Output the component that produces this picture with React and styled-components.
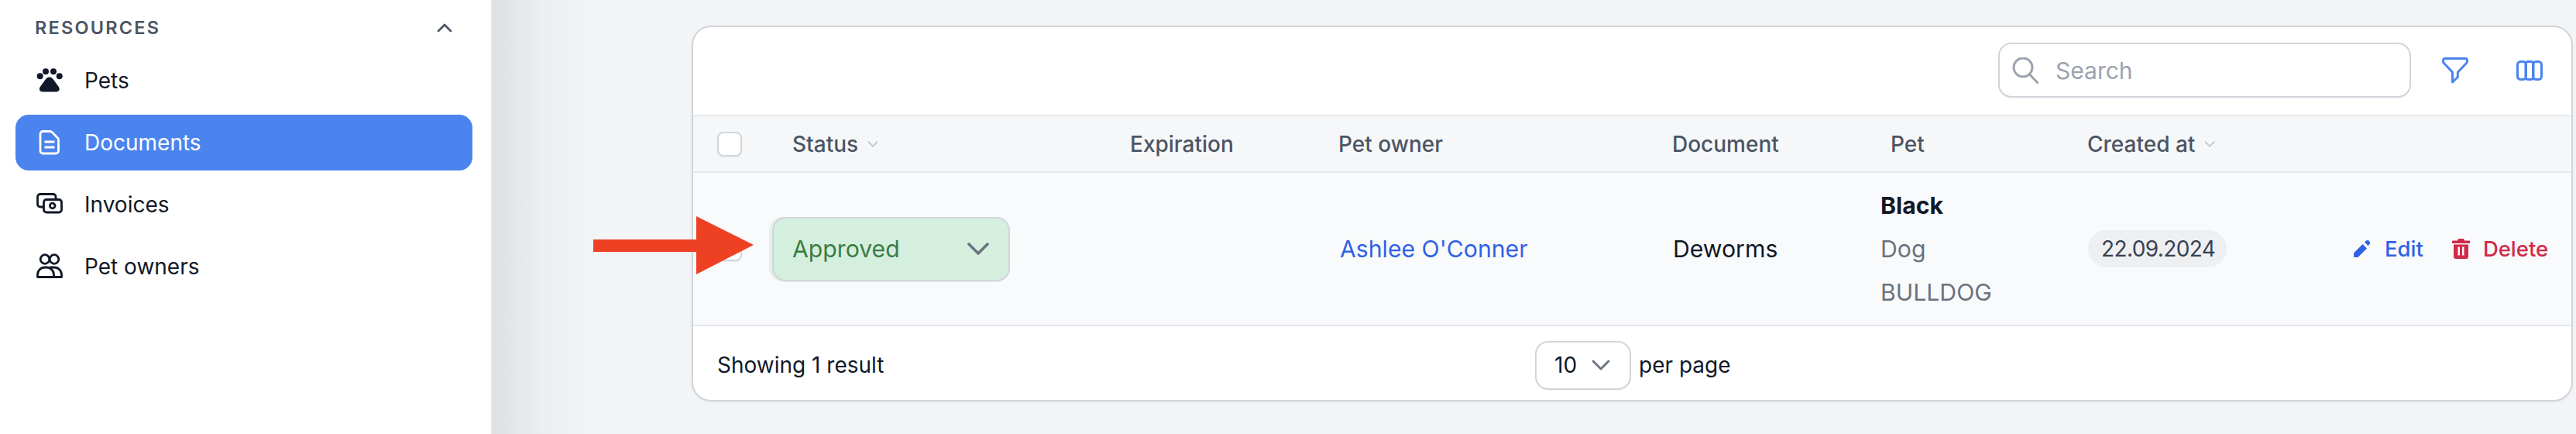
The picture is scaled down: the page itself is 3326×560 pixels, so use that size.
import React from 'react';
import styled, { createGlobalStyle } from 'styled-components';
import { ChevronDown, ChevronUp } from 'lucide-react';

const GlobalStyle = createGlobalStyle`
    html, body {
        margin: 0;
        padding: 0;
        background: #f3f4f6;
        font-family: Inter, "Liberation Sans", sans-serif;
    }
    * {
        box-sizing: border-box;
    }
`

const COLUMNS = '102px 462px 269px 431px 269px 267px 343px 1fr';

const Page = styled.div`
    display: flex;
    width: 3326px;
    height: 560px;
    overflow: hidden;
`

const Sidebar = styled.aside`
    width: 636px;
    flex-shrink: 0;
    background: #fff;
    border-right: 2px solid #e5e7eb;
    padding: 0 24px 0 20px;
`

const SectionHead = styled.div`
    display: flex;
    align-items: center;
    justify-content: space-between;
    height: 68px;
    padding: 3px 20px 0 25px;
    font-size: 23.5px;
    font-weight: 600;
    letter-spacing: 2.2px;
    color: #4b5563;
    svg {
        color: #4b5563;
    }
`

const NavList = styled.nav`
    display: flex;
    flex-direction: column;
    gap: 8px;
`

const NavItem = styled.a`
    display: flex;
    align-items: center;
    gap: 28px;
    height: 72px;
    padding-left: 27px;
    border-radius: 17px;
    font-size: 28px;
    background: ${p => (p.$active ? '#4b84ee' : 'transparent')};
    color: ${p => (p.$active ? '#fff' : '#111827')};
    svg {
        width: 34px;
        height: 34px;
        flex-shrink: 0;
    }
`

const Main = styled.main`
    flex: 1;
    padding: 33px 4px 0 257px;
    position: relative;
    background: linear-gradient(90deg, #dfe0e2, #eceef0 64px, #f3f4f6 140px);
`

const Card = styled.section`
    height: 485px;
    background: #fff;
    border: 2px solid #d1d5db;
    border-radius: 25px;
    overflow: hidden;
    box-shadow: 0 1px 3px rgba(0, 0, 0, 0.06);
`

const Toolbar = styled.div`
    display: flex;
    align-items: center;
    height: 113px;
    padding: 0 37px 2px 1685px;
`

const SearchBox = styled.label`
    display: flex;
    align-items: center;
    gap: 22px;
    width: 533px;
    height: 71px;
    padding-left: 16px;
    border: 2px solid #d1d5db;
    border-radius: 17px;
    background: #fff;
    font-size: 30px;
    color: #9ca3af;
    box-shadow: 0 1px 2px rgba(0, 0, 0, 0.05);
`

const ToolButton = styled.span`
    display: flex;
    margin-left: ${p => p.$gap}px;
    color: #4b84ee;
`

const HeadRow = styled.div`
    display: grid;
    grid-template-columns: ${COLUMNS};
    align-items: center;
    height: 75px;
    border-top: 2px solid #e5e7eb;
    border-bottom: 2px solid #e5e7eb;
    background: #f6f7f9;
    font-size: 28px;
    font-weight: 500;
    color: #4b5563;
`

const HeadCell = styled.div`
    display: flex;
    align-items: center;
    gap: 8px;
    padding-left: ${p => p.$inset || 0}px;
    svg {
        color: #c5c9d0;
    }
`

const BodyRow = styled.div`
    display: grid;
    grid-template-columns: ${COLUMNS};
    align-items: center;
    height: 198px;
    border-bottom: 2px solid #e5e7eb;
    background: #f9fafb;
    font-size: 30.2px;
    color: #111827;
`

const BodyCell = styled.div`
    padding-left: ${p => p.$inset || 0}px;
`

const Checkbox = styled.span`
    display: block;
    width: 32px;
    height: 32px;
    margin-left: 31px;
    background: #fff;
    border: 2px solid #d1d5db;
    border-radius: 8px;
    box-shadow: 0 1px 2px rgba(0, 0, 0, 0.06);
`

const StatusSelect = styled.div`
    display: flex;
    align-items: center;
    justify-content: space-between;
    width: 307px;
    height: 83px;
    padding: 0 15px 0 24px;
    background: #d5efdf;
    border: 2px solid #d1d5db;
    border-radius: 17px;
    color: #3a7d44;
    box-shadow: -4px 0 0 #e3f3e9, 0 1px 2px rgba(0, 0, 0, 0.06);
    svg {
        color: #6b7280;
    }
`

const OwnerLink = styled.a`
    color: #2f62e5;
`

const PetLines = styled.div`
    display: flex;
    flex-direction: column;
    line-height: 56px;
    color: #6b7280;
    strong {
        font-weight: 700;
        color: #111827;
    }
`

const DateBadge = styled.span`
    display: inline-block;
    padding: 0 15px 0 17px;
    height: 48px;
    line-height: 48px;
    border-radius: 24px;
    background: #eeeff1;
    color: #374151;
    font-size: 28px;
    letter-spacing: -0.6px;
`

const Actions = styled.div`
    display: flex;
    align-items: center;
    font-size: 27.5px;
    font-weight: 500;
`

const ActionLink = styled.a`
    display: flex;
    align-items: center;
    gap: ${p => p.$iconGap}px;
    margin-left: ${p => p.$gap || 0}px;
    color: ${p => p.$color};
`

const Footer = styled.div`
    display: grid;
    grid-template-columns: 1056px 1fr;
    align-items: center;
    height: 96px;
    padding: 4px 0 0 31px;
    font-size: 28px;
    color: #111827;
`

const PerPage = styled.div`
    display: flex;
    align-items: center;
    gap: 10px;
`

const PerPageSelect = styled.div`
    display: flex;
    align-items: center;
    justify-content: space-between;
    width: 124px;
    height: 63px;
    padding: 0 27px 0 23px;
    border: 2px solid #d1d5db;
    border-radius: 17px;
    background: #fff;
    box-shadow: 0 1px 2px rgba(0, 0, 0, 0.05);
    svg {
        color: #6b7280;
        margin: 0 -10px;
    }
`

const Pointer = styled.svg`
    position: absolute;
    left: 130px;
    top: 279px;
`

const PawIcon = () => (
    <svg viewBox="0 0 34 34" fill="currentColor">
        <circle cx="4.7" cy="11.3" r="4" />
        <circle cx="12" cy="5.3" r="4" />
        <circle cx="22" cy="5.3" r="4" />
        <circle cx="29.7" cy="11.3" r="4" />
        <path d="M16.8 12.5c2 0 3.7 1 5 3l6.8 9.3c2.2 3.1 1 6.7-3 6.7H8c-4 0-5.2-3.6-3-6.7l6.8-9.3c1.300-2 3-3 5-3z" />
    </svg>
)

const DocumentIcon = () => (
    <svg viewBox="0 0 34 34" fill="none" stroke="currentColor" strokeWidth="2.8" strokeLinejoin="round">
        <path d="M5 6a3.500 3.500 0 0 1 3.500-3.500h9.500a3 3 0 0 1 2.200 1L27.500 11a3 3 0 0 1 1 2.200V27.500a3.500 3.500 0 0 1-3.500 3.500H8.500A3.500 3.500 0 0 1 5 27.500z" />
        <path d="M10.500 16h13M10.500 23h13" />
    </svg>
)

const InvoiceIcon = () => (
    <svg viewBox="0 0 34 34" fill="none" stroke="currentColor" strokeWidth="2.8">
        <path d="M9 20H5a3.500 3.500 0 0 1-3.500-3.500V7A3.500 3.500 0 0 1 5 3.500h16.500A3.500 3.500 0 0 1 25 7v3.500" />
        <rect x="9.500" y="10.500" width="23" height="16.500" rx="3.500" />
        <circle cx="20.700" cy="18.500" r="3.300" />
    </svg>
)

const PetOwnersIcon = () => (
    <svg viewBox="0 0 34 34" fill="none" stroke="currentColor" strokeWidth="2.8" strokeLinejoin="round">
        <circle cx="11" cy="7.500" r="5.800" />
        <circle cx="23" cy="7.500" r="5.800" />
        <path d="M1.500 30.500v-3a9.500 9.500 0 0 1 9.500-9.500h2a9.500 9.500 0 0 1 9.500 9.500v3z" />
        <path d="M17 18h6a9.500 9.500 0 0 1 9.500 9.500v3H22.500" />
    </svg>
)

const SearchIcon = () => (
    <svg width="34" height="34" viewBox="0 0 34 34" fill="none" stroke="currentColor" strokeWidth="3" strokeLinecap="round">
        <circle cx="14" cy="13" r="12" />
        <path d="M23 22.500L32.500 32.500" />
    </svg>
)

const FilterIcon = () => (
    <svg width="34" height="34" viewBox="0 0 34 34" fill="none" stroke="currentColor" strokeWidth="3" strokeLinejoin="round">
        <path d="M4 1.500h26a2.500 2.500 0 0 1 2.500 2.500v1.500a2.500 2.500 0 0 1-.8 1.800L21 18.500a2 2 0 0 0-.7 1.500v5.500L13.500 32V20a2 2 0 0 0-.7-1.500L2.300 7.300a2.500 2.500 0 0 1-.8-1.800V4A2.500 2.500 0 0 1 4 1.500z" />
    </svg>
)

const ColumnsIcon = () => (
    <svg width="34" height="26" viewBox="0 0 34 26" fill="none" stroke="currentColor" strokeWidth="3">
        <rect x="1.500" y="1.500" width="11" height="23" rx="4" />
        <rect x="12" y="1.500" width="10" height="23" rx="3" />
        <rect x="21.500" y="1.500" width="11" height="23" rx="4" />
    </svg>
)

const PencilIcon = () => (
    <svg width="23" height="24" viewBox="0 0 23 24" fill="currentColor">
        <path d="M1 17.500L12.500 6l5.500 5.500L6.500 23H2.500A1.500 1.500 0 0 1 1 21.500zM15 3.500l1.500-1.500c1.500-1.500 3-1.500 4.500 0s1.500 3 0 4.500L19.500 8z" />
    </svg>
)

const TrashIcon = () => (
    <svg width="23" height="26" viewBox="0 0 23 26" fill="currentColor" fillRule="evenodd">
        <path d="M8 0h7l1 2.500h6a1 1 0 0 1 1 1V6H0V3.500a1 1 0 0 1 1-1h6zM2 7.500h19V23c0 2-1 3-3 3H5c-2 0-3-1-3-3zM7.500 10.500v11h2.500v-11zM13 10.500v11h2.500v-11z" />
    </svg>
)

const columns = [
    { label: 'Status', inset: 26, sortable: true },
    { label: 'Expiration' },
    { label: 'Pet owner' },
    { label: 'Document' },
    { label: 'Pet', inset: 13 },
    { label: 'Created at', sortable: true },
]

const App = () => {
    return (
        <Page>
            <GlobalStyle />
            <Sidebar>
                <SectionHead>
                    RESOURCES
                    <ChevronUp size={32} strokeWidth={2} />
                </SectionHead>
                <NavList>
                    <NavItem><PawIcon />Pets</NavItem>
                    <NavItem $active><DocumentIcon />Documents</NavItem>
                    <NavItem><InvoiceIcon />Invoices</NavItem>
                    <NavItem><PetOwnersIcon />Pet owners</NavItem>
                </NavList>
            </Sidebar>
            <Main>
                <Card>
                    <Toolbar>
                        <SearchBox>
                            <SearchIcon />
                            Search
                        </SearchBox>
                        <ToolButton $gap={40}><FilterIcon /></ToolButton>
                        <ToolButton $gap={62}><ColumnsIcon /></ToolButton>
                    </Toolbar>
                    <HeadRow>
                        <HeadCell><Checkbox /></HeadCell>
                        {columns.map(col => (
                            <HeadCell key={col.label} $inset={col.inset}>
                                {col.label}
                                {col.sortable && <ChevronDown size={22} strokeWidth={2} />}
                            </HeadCell>
                        ))}
                    </HeadRow>
                    <BodyRow>
                        <BodyCell><Checkbox /></BodyCell>
                        <BodyCell>
                            <StatusSelect>Approved<ChevronDown size={48} strokeWidth={1.8} /></StatusSelect>
                        </BodyCell>
                        <BodyCell />
                        <BodyCell $inset={2}><OwnerLink>Ashlee O'Conner</OwnerLink></BodyCell>
                        <BodyCell $inset={1}>Deworms</BodyCell>
                        <BodyCell>
                            <PetLines>
                                <strong>Black</strong>
                                <span>Dog</span>
                                <span>BULLDOG</span>
                            </PetLines>
                        </BodyCell>
                        <BodyCell $inset={1}><DateBadge>22.09.2024</DateBadge></BodyCell>
                        <Actions>
                            <ActionLink $color="#2f62e5" $iconGap={18}><PencilIcon />Edit</ActionLink>
                            <ActionLink $color="#d02a49" $iconGap={17} $gap={37}><TrashIcon />Delete</ActionLink>
                        </Actions>
                    </BodyRow>
                    <Footer>
                        <span>Showing 1 result</span>
                        <PerPage>
                            <PerPageSelect>10<ChevronDown size={40} strokeWidth={1.7} /></PerPageSelect>
                            per page
                        </PerPage>
                    </Footer>
                </Card>
                <Pointer width="207" height="75" viewBox="0 0 207 75">
                    <path d="M0 30h133V0l74 37-74 38V46H0z" fill="#ee4023" />
                </Pointer>
            </Main>
        </Page>
    )
}

export default App;
